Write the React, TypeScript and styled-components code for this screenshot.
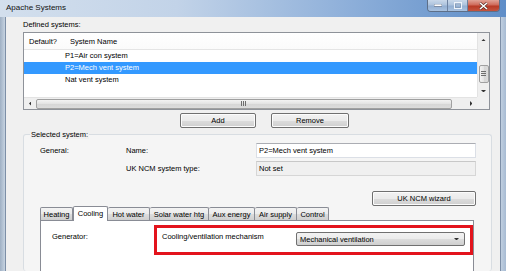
import React from 'react';
import styled, { createGlobalStyle } from 'styled-components';

const GlobalStyle = createGlobalStyle`
  html, body {
    margin: 0;
    padding: 0;
  }
  body {
    width: 506px;
    height: 271px;
    overflow: hidden;
    background: #c4d2e2;
    font-family: 'Liberation Sans', Arial, sans-serif;
    font-size: 7.5px;
    color: #000;
  }
`;

const Window = styled.div`
  width: 506px;
  height: 271px;
  display: flex;
  flex-direction: column;
  overflow: hidden;
`;

const TitleBar = styled.div`
  height: 17px;
  flex: none;
  display: flex;
  align-items: flex-start;
  background: linear-gradient(to right, #d3dfed 0%, #c2d3e8 35%, #8caed9 70%, #5f8ec8 100%);
`;

const TitleText = styled.div`
  padding-left: 6px;
  line-height: 16px;
  font-size: 8px;
  color: #111;
`;

const CaptionGroup = styled.div`
  margin-left: auto;
  margin-right: 6px;
  display: flex;
  height: 11px;
  border: 1px solid #5d6f88;
  border-top: none;
  border-radius: 0 0 4px 4px;
  overflow: hidden;
`;

const CaptionButton = styled.div<{ $close?: boolean; $w: number }>`
  width: ${(p) => p.$w}px;
  display: flex;
  align-items: center;
  justify-content: center;
  background: ${(p) =>
    p.$close
      ? 'linear-gradient(#e0a397 0%, #cf6a5a 45%, #b83a26 55%, #c4543f 100%)'
      : 'linear-gradient(#c9d8ea 0%, #adc3dd 45%, #93afd2 55%, #a9c2e0 100%)'};
  & + & {
    border-left: 1px solid #6c81a0;
  }
`;

const Body = styled.div`
  flex: 1;
  display: flex;
  min-height: 0;
`;

const Frame = styled.div<{ $side: 'left' | 'right' }>`
  width: 6px;
  flex: none;
  background: ${(p) =>
    p.$side === 'left'
      ? 'linear-gradient(to right, #9fb0c4, #c6d3e1)'
      : 'linear-gradient(to right, #c0cfe0, #a7bbd3)'};
  border-${(p) => (p.$side === 'left' ? 'right' : 'left')}: 1px solid #7d8fa7;
  box-sizing: border-box;
`;

const Client = styled.div`
  flex: 1;
  background: #f0f0f0;
  padding: 0 10px 0 17px;
  display: flex;
  flex-direction: column;
  min-width: 0;
`;

const SectionLabel = styled.div`
  height: 15px;
  line-height: 15px;
  flex: none;
`;

const ListBox = styled.div`
  height: 78px;
  flex: none;
  box-sizing: border-box;
  border: 1px solid #8e9299;
  background: #fff;
  display: grid;
  grid-template-columns: 1fr 12px;
  grid-template-rows: 1fr 12px;
`;

const ListContent = styled.div`
  display: flex;
  flex-direction: column;
  overflow: hidden;
`;

const ListHeader = styled.div`
  height: 16px;
  flex: none;
  display: flex;
  align-items: center;
  border-bottom: 1px solid #e5e5e5;
  background: linear-gradient(#ffffff, #fbfbfb);
`;

const HeaderCell = styled.div<{ $w?: number }>`
  width: ${(p) => (p.$w ? `${p.$w}px` : 'auto')};
  padding-left: 5px;
  box-sizing: border-box;
  flex: ${(p) => (p.$w ? 'none' : '1')};
`;

const ListRow = styled.div<{ $selected?: boolean }>`
  height: 12px;
  line-height: 12px;
  padding-left: 41px;
  background: ${(p) => (p.$selected ? '#3399ff' : 'transparent')};
  color: ${(p) => (p.$selected ? '#fff' : '#000')};
`;

const VScroll = styled.div`
  background: #efefef;
  border-left: 1px solid #e3e3e3;
  display: flex;
  flex-direction: column;
  align-items: center;
`;

const HScroll = styled.div`
  background: #efefef;
  border-top: 1px solid #e3e3e3;
  display: flex;
  align-items: center;
`;

const Corner = styled.div`
  background: #f0f0f0;
`;

const ArrowCell = styled.div<{ $size: number }>`
  width: ${(p) => p.$size}px;
  height: ${(p) => p.$size}px;
  flex: none;
  display: flex;
  align-items: center;
  justify-content: center;
`;

const Thumb = styled.div<{ $vertical?: boolean }>`
  box-sizing: border-box;
  border: 1px solid #a0a0a0;
  border-radius: 2px;
  display: flex;
  align-items: center;
  justify-content: center;
  background: ${(p) =>
    p.$vertical
      ? 'linear-gradient(to right, #f3f3f3, #e2e2e2 50%, #d6d6d6 51%, #dcdcdc)'
      : 'linear-gradient(#f3f3f3, #e2e2e2 50%, #d6d6d6 51%, #dcdcdc)'};
`;

const Spacer = styled.div`
  flex: 1;
`;

const ButtonRow = styled.div`
  display: flex;
  gap: 15px;
  padding-left: 157px;
  margin-top: 3px;
  flex: none;
`;

const PushButton = styled.div<{ $w: number }>`
  width: ${(p) => p.$w}px;
  height: 15px;
  box-sizing: border-box;
  border: 1px solid #707070;
  border-radius: 2px;
  background: linear-gradient(#f2f2f2 0%, #ebebeb 50%, #dddddd 51%, #cfcfcf 100%);
  box-shadow: inset 0 0 0 1px #fcfcfc;
  display: flex;
  align-items: center;
  justify-content: center;
  flex: none;
`;

const GroupBox = styled.fieldset`
  margin: 2px 0 0 0;
  padding: 0 15px 0 16px;
  border: 1px solid #d8dde2;
  border-radius: 3px;
  border-bottom: none;
  background: #f5f5f5;
  flex: 1;
  display: flex;
  flex-direction: column;
  min-height: 0;
`;

const Legend = styled.legend`
  padding: 0 1px;
  margin-left: -10px;
  line-height: 9px;
  background: #f0f0f0;
`;

const FieldGrid = styled.div`
  display: grid;
  grid-template-columns: 86px 130px 1fr;
  row-gap: 3px;
  align-items: center;
  margin-top: 4px;
`;

const TextField = styled.div<{ $readOnly?: boolean }>`
  height: 15px;
  box-sizing: border-box;
  border: 1px solid ${(p) => (p.$readOnly ? '#d6d6d6' : '#dbdfe6')};
  border-top-color: ${(p) => (p.$readOnly ? '#c8c8c8' : '#abadb3')};
  background: ${(p) => (p.$readOnly ? '#f0f0f0' : '#ffffff')};
  padding-left: 2px;
  line-height: 13px;
`;

const WizardRow = styled.div`
  display: flex;
  justify-content: flex-end;
  margin-top: 15px;
`;

const TabStrip = styled.div`
  display: flex;
  align-items: flex-end;
  height: 14px;
  margin-right: 2px;
`;

const Tab = styled.div<{ $w: number; $active?: boolean }>`
  width: ${(p) => p.$w}px;
  height: ${(p) => (p.$active ? 15 : 13)}px;
  box-sizing: border-box;
  border: 1px solid #898c95;
  border-bottom: none;
  border-left-width: ${(p) => (p.$active ? 1 : 0)}px;
  margin-bottom: ${(p) => (p.$active ? -1 : 0)}px;
  border-radius: 2px 2px 0 0;
  background: ${(p) =>
    p.$active ? '#ffffff' : 'linear-gradient(#f3f3f3 0%, #ebebeb 50%, #dddddd 51%, #cfcfcf 100%)'};
  display: flex;
  align-items: center;
  justify-content: center;
  line-height: 11px;
  padding-bottom: ${(p) => (p.$active ? 2 : 0)}px;
  position: relative;
  z-index: ${(p) => (p.$active ? 1 : 0)};
  &:first-child {
    border-left-width: 1px;
  }
`;

const TabPanel = styled.div`
  flex: 1;
  margin-right: 2px;
  border: 1px solid #898c95;
  border-bottom: none;
  background: #ffffff;
  padding: 4px 0 0 11px;
  display: flex;
  align-items: flex-start;
`;

const PanelLabel = styled.div`
  width: 102px;
  flex: none;
  line-height: 10px;
  margin-top: 7px;
`;

const Highlight = styled.div`
  width: 319px;
  height: 30px;
  flex: none;
  box-sizing: border-box;
  border: 3px solid #e3131c;
  padding: 4px 5px 0 5px;
  display: flex;
  align-items: flex-start;
`;

const HighlightLabel = styled.div`
  line-height: 10px;
`;

const Dropdown = styled.div`
  margin-left: auto;
  width: 169px;
  height: 14px;
  box-sizing: border-box;
  border: 1px solid #707070;
  border-radius: 2px;
  background: linear-gradient(#f2f2f2 0%, #ebebeb 50%, #dddddd 51%, #cfcfcf 100%);
  display: flex;
  align-items: center;
  padding: 0 5px 0 3px;
`;

const DropText = styled.div`
  flex: 1;
`;

const Triangle = ({ dir, size = 3 }: { dir: 'up' | 'down' | 'left' | 'right'; size?: number }) => {
  const s = size;
  const pts = {
    up: `0,${s} ${s},0 ${s * 2},${s}`,
    down: `0,0 ${s * 2},0 ${s},${s}`,
    left: `${s},0 ${s},${s * 2} 0,${s}`,
    right: `0,0 0,${s * 2} ${s},${s}`,
  }[dir];
  const w = dir === 'up' || dir === 'down' ? s * 2 : s;
  const h = dir === 'up' || dir === 'down' ? s : s * 2;
  return (
    <svg width={w} height={h} viewBox={`0 0 ${w} ${h}`}>
      <polygon points={pts} fill="#333" />
    </svg>
  );
};

const Grip = ({ vertical }: { vertical?: boolean }) =>
  vertical ? (
    <svg width="5" height="6" viewBox="0 0 5 6">
      <path d="M0 0.5H5M0 2.5H5M0 4.5H5" stroke="#6e6e6e" strokeWidth="1" />
    </svg>
  ) : (
    <svg width="6" height="5" viewBox="0 0 6 5">
      <path d="M0.5 0V5M2.5 0V5M4.5 0V5" stroke="#6e6e6e" strokeWidth="1" />
    </svg>
  );

const App = () => {
  const systems = [
    { name: 'P1=Air con system' },
    { name: 'P2=Mech vent system', selected: true },
    { name: 'Nat vent system' },
  ];

  const tabs = [
    { label: 'Heating', w: 33 },
    { label: 'Cooling', w: 35, active: true },
    { label: 'Hot water', w: 42 },
    { label: 'Solar water htg', w: 59 },
    { label: 'Aux energy', w: 46 },
    { label: 'Air supply', w: 42 },
    { label: 'Control', w: 32 },
  ];

  return (
    <Window>
      <GlobalStyle />
      <TitleBar>
        <TitleText>Apache Systems</TitleText>
        <CaptionGroup>
          <CaptionButton $w={19}>
            <svg width="8" height="3" viewBox="0 0 8 3">
              <rect x="0" y="0" width="8" height="2.5" fill="#fff" stroke="#4a5d78" strokeWidth="0.6" />
            </svg>
          </CaptionButton>
          <CaptionButton $w={19}>
            <svg width="8" height="7" viewBox="0 0 8 7">
              <rect x="0.5" y="0.5" width="7" height="6" fill="none" stroke="#eef3fa" strokeWidth="1" />
              <rect x="1.5" y="2" width="5" height="3.5" fill="none" stroke="#7b8fab" strokeWidth="0.6" />
            </svg>
          </CaptionButton>
          <CaptionButton $w={31} $close>
            <svg width="9" height="8" viewBox="0 0 9 8">
              <path d="M1 1L8 7M8 1L1 7" stroke="#4a2a24" strokeWidth="2.6" />
              <path d="M1 1L8 7M8 1L1 7" stroke="#ffffff" strokeWidth="1.6" />
            </svg>
          </CaptionButton>
        </CaptionGroup>
      </TitleBar>
      <Body>
        <Frame $side="left" />
        <Client>
          <SectionLabel>Defined systems:</SectionLabel>
          <ListBox>
            <ListContent>
              <ListHeader>
                <HeaderCell $w={41}>Default?</HeaderCell>
                <HeaderCell>System Name</HeaderCell>
              </ListHeader>
              {systems.map((s) => (
                <ListRow key={s.name} $selected={s.selected}>
                  {s.name}
                </ListRow>
              ))}
            </ListContent>
            <VScroll>
              <ArrowCell $size={14}>
                <Triangle dir="up" size={2.5} />
              </ArrowCell>
              <div style={{ height: 18 }} />
              <Thumb $vertical style={{ width: 10, height: 18 }}>
                <Grip vertical />
              </Thumb>
              <Spacer />
              <ArrowCell $size={12}>
                <Triangle dir="down" size={2.5} />
              </ArrowCell>
            </VScroll>
            <HScroll>
              <ArrowCell $size={12}>
                <Triangle dir="left" size={2.5} />
              </ArrowCell>
              <Thumb style={{ width: 416, height: 10 }}>
                <Grip />
              </Thumb>
              <Spacer />
              <ArrowCell $size={12}>
                <Triangle dir="right" size={2.5} />
              </ArrowCell>
            </HScroll>
            <Corner />
          </ListBox>
          <ButtonRow>
            <PushButton $w={76}>Add</PushButton>
            <PushButton $w={78}>Remove</PushButton>
          </ButtonRow>
          <GroupBox>
            <Legend>Selected system:</Legend>
            <FieldGrid>
              <div>General:</div>
              <div>Name:</div>
              <TextField>P2=Mech vent system</TextField>
              <div />
              <div>UK NCM system type:</div>
              <TextField $readOnly>Not set</TextField>
            </FieldGrid>
            <WizardRow>
              <PushButton $w={104}>UK NCM wizard</PushButton>
            </WizardRow>
            <TabStrip>
              {tabs.map((t) => (
                <Tab key={t.label} $w={t.w} $active={t.active}>
                  {t.label}
                </Tab>
              ))}
            </TabStrip>
            <TabPanel>
              <PanelLabel>Generator:</PanelLabel>
              <Highlight>
                <HighlightLabel>Cooling/ventilation mechanism</HighlightLabel>
                <Dropdown>
                  <DropText>Mechanical ventilation</DropText>
                  <Triangle dir="down" size={2.5} />
                </Dropdown>
              </Highlight>
            </TabPanel>
          </GroupBox>
        </Client>
        <Frame $side="right" />
      </Body>
    </Window>
  );
};

export default App;
